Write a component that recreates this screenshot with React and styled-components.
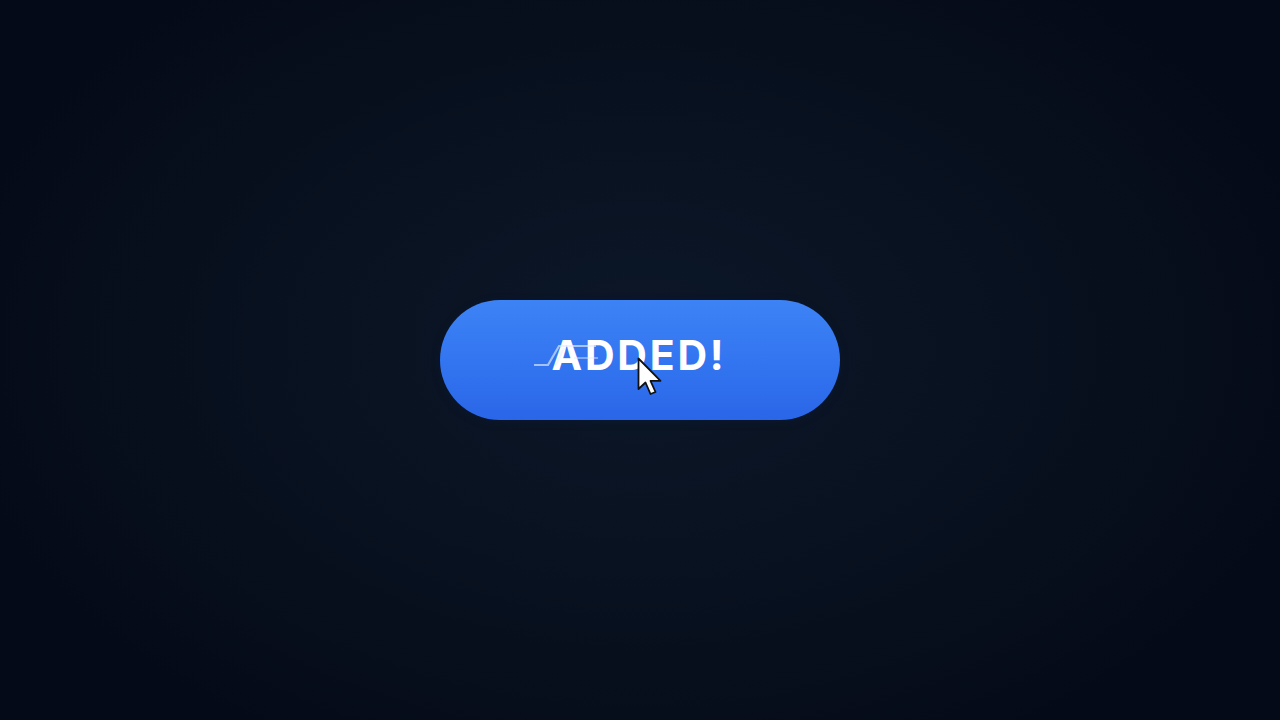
import React from 'react'
import styled, { createGlobalStyle } from 'styled-components'

const Global = createGlobalStyle`
  html, body { margin: 0; padding: 0; }
  body { background: #050a17; }
`

const Stage = styled.div`
  width: 1280px;
  height: 720px;
  display: flex;
  align-items: center;
  justify-content: center;
  background: radial-gradient(ellipse 700px 460px at 50% 48%, #0c1728 0%, #08111f 55%, #050a18 100%);
  overflow: hidden;
`

const Button = styled.button`
  position: relative;
  width: 400px;
  height: 120px;
  border: none;
  border-radius: 60px;
  background: linear-gradient(180deg, #3d83f5 0%, #3274f0 55%, #2a66e8 100%);
  box-shadow: 0 2px 8px rgba(10, 30, 80, 0.25);
  display: flex;
  align-items: center;
  justify-content: center;
  padding: 0 0 10px 0;
  cursor: pointer;
`

const Label = styled.span`
  position: relative;
  font-family: Inter, "Liberation Sans", sans-serif;
  font-weight: 700;
  font-size: 41px;
  letter-spacing: 2.8px;
  color: #ffffff;
  margin-left: -2px;
`

const Trail = styled.svg`
  position: absolute;
  left: -18px;
  top: 13px;
  overflow: visible;
`

const Pointer = styled.svg`
  position: absolute;
  left: 197px;
  top: 57px;
`

export default function App() {
  return (
    <Stage>
      <Global />
      <Button>
        <Label>
          <Trail width="70" height="30" viewBox="0 0 70 30">
            <path d="M0 22 H14 L25 3 H62" fill="none" stroke="rgba(225,236,255,0.65)" strokeWidth="2.2" />
            <path d="M22 22 L30 5" fill="none" stroke="rgba(225,236,255,0.45)" strokeWidth="2" />
            <path d="M40 15 H64" fill="none" stroke="rgba(225,236,255,0.45)" strokeWidth="2" />
          </Trail>
          ADDED!
        </Label>
        <Pointer width="28" height="42" viewBox="0 0 28 42">
          <path d="M1.5 1.5 L1.5 32 L8.5 25.5 L13.5 37 L18.5 35 L13.5 23.8 L23.5 23.8 Z" fill="#ffffff" stroke="#111" strokeWidth="1.8" strokeLinejoin="round" />
        </Pointer>
      </Button>
    </Stage>
  )
}
